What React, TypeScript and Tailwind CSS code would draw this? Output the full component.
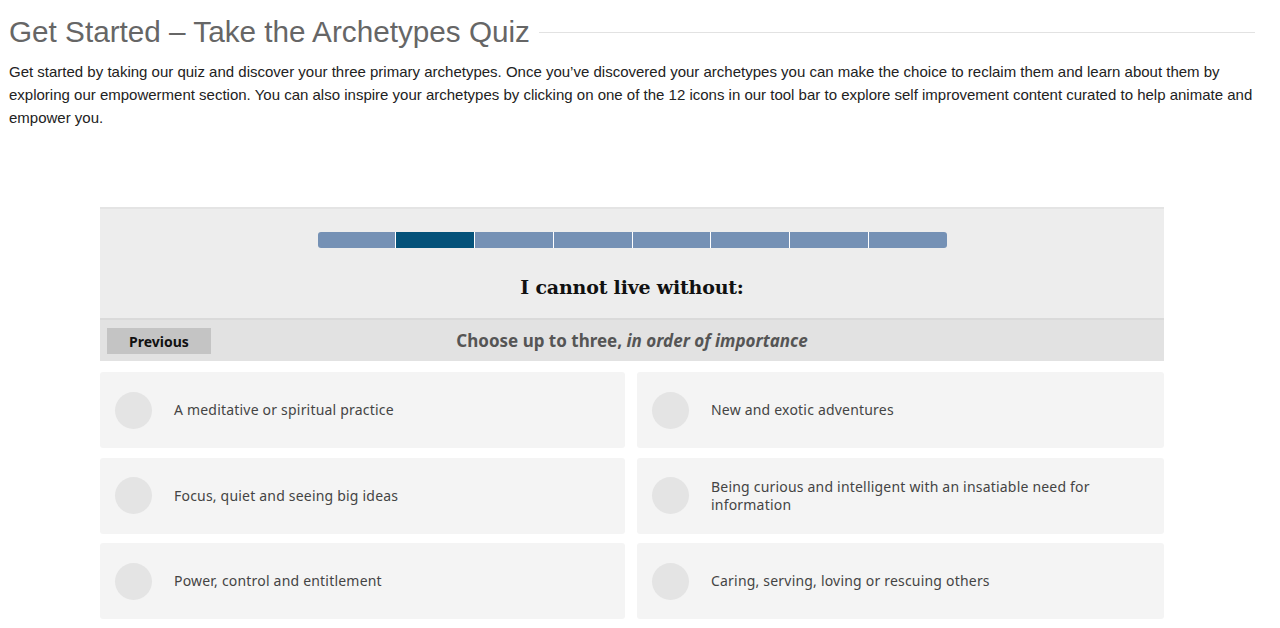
export default function App() {
  const options = [
    "A meditative or spiritual practice",
    "New and exotic adventures",
    "Focus, quiet and seeing big ideas",
    "Being curious and intelligent with an insatiable need for information",
    "Power, control and entitlement",
    "Caring, serving, loving or rescuing others",
  ];

  return (
    <div className="min-h-[628px] bg-white">
      <div className="pl-[9px] pr-[25px] pt-[14px]">
        <div className="flex items-center">
          <h1 className="text-[29.7px] leading-[36px] text-[#666] font-['Liberation_Sans',Arial,sans-serif] whitespace-nowrap">
            Get Started – Take the Archetypes Quiz
          </h1>
          <div className="flex-1 h-px bg-[#e2e2e2] ml-[9px] mt-[1px]" />
        </div>
        <p className="mt-[10px] text-[15px] leading-[23px] text-[#222] font-['Liberation_Sans',Arial,sans-serif]">
          Get started by taking our quiz and discover your three primary archetypes. Once you’ve discovered your archetypes you can make the choice to reclaim them and learn about them by exploring our empowerment section. You can also inspire your archetypes by clicking on one of the 12 icons in our tool bar to explore self improvement content curated to help animate and empower you.
        </p>
      </div>

      <div className="mx-[100px] w-[1064px] mt-[78px]">
        <div className="bg-[#ededed] border-t-2 border-[#e4e4e4] pt-[23px] pb-[16px]">
          <div className="mx-auto w-[629px] h-[16px] flex rounded-[3px] overflow-hidden">
            {Array.from({ length: 8 }).map((_, i) => (
              <div
                key={i}
                className={`flex-1 ${i > 0 ? "border-l border-white" : ""} ${i === 1 ? "bg-[#04527a]" : "bg-[#7591b5]"}`}
              />
            ))}
          </div>
          <h2 className="mt-[24px] text-center text-[19px] leading-[30px] font-bold text-[#111] font-['DejaVu_Serif',Georgia,serif] tracking-[-0.2px]">
            I cannot live without:
          </h2>
        </div>
        <div className="relative bg-[#e2e2e2] border-t-2 border-[#dadada] h-[43px] flex items-center justify-center">
          <button className="absolute left-[7px] top-[8px] w-[104px] h-[26px] bg-[#c4c4c4] text-[14px] font-bold text-[#111] font-['Noto_Sans',sans-serif]">
            Previous
          </button>
          <p className="text-[17px] font-bold text-[#555] font-['Noto_Sans',sans-serif]">
            Choose up to three, <em>in order of importance</em>
          </p>
        </div>
        <div className="grid grid-cols-[525px_1fr] gap-x-[12px] gap-y-[9.5px] mt-[11px]">
          {options.map((o) => (
            <div
              key={o}
              className="h-[76px] bg-[#f4f4f4] rounded-[3px] flex items-center pl-[15px] pr-[60px]"
            >
              <div className="w-[37px] h-[37px] rounded-full bg-[#e4e4e4] shrink-0" />
              <span className="ml-[22px] text-[14px] leading-[18px] text-[#444] font-['Noto_Sans',sans-serif] tracking-[0.2px]">
                {o}
              </span>
            </div>
          ))}
        </div>
      </div>
    </div>
  );
}
